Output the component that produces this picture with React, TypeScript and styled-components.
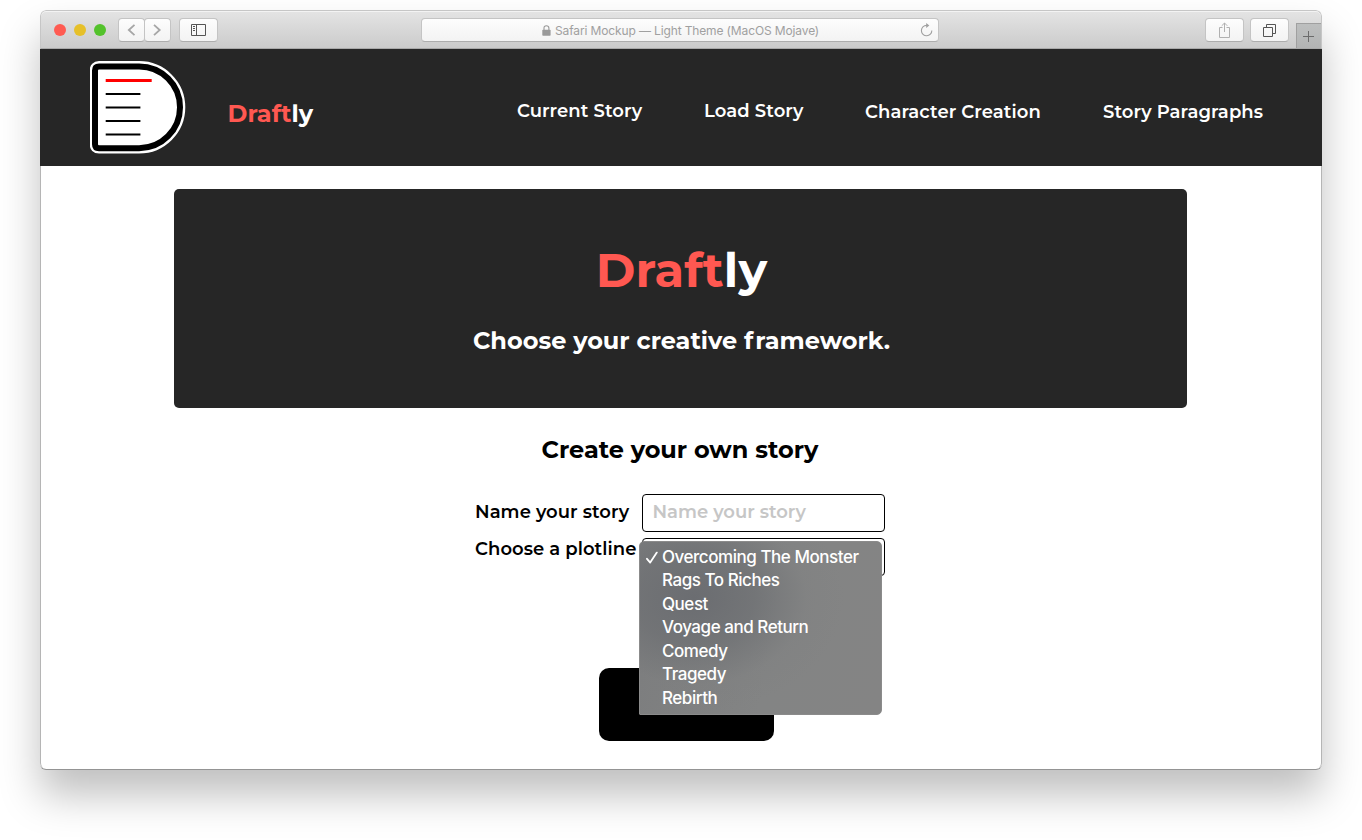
import React from "react";
import styled, { createGlobalStyle } from "styled-components";

const GlobalStyle = createGlobalStyle`
  * { box-sizing: border-box; }
  body { margin: 0; background: #fff; overflow: hidden; }
  h1, h2, p { margin: 0; }
`;

const display = `Montserrat, Inter, "Open Sans", sans-serif`;

const Desktop = styled.div`
  width: 1362px;
  height: 840px;
  padding: 10px 40px 0;
  overflow: hidden;
  background: #fff;
`;

const Window = styled.div`
  width: 1282px;
  height: 760px;
  border-radius: 6px;
  overflow: hidden;
  background: #fff;
  display: flex;
  flex-direction: column;
  border-bottom: 1px solid #949494;
  box-shadow: 0 25px 40px rgba(0, 0, 0, 0.25);
`;

const TitleBar = styled.div`
  height: 39px;
  flex: none;
  display: flex;
  align-items: flex-start;
  padding: 7px 0 0 13px;
  border: 1px solid #c6c6c6;
  border-bottom-color: #a9a9a9;
  border-radius: 6px 6px 0 0;
  background: linear-gradient(#e4e4e4, #cbcbcb);
  box-shadow: inset 0 1px 0 #f3f3f3;
`;

const Lights = styled.div`
  display: flex;
  gap: 8px;
  margin: 6px 12px 0 0;
`;

const Light = styled.span<{ $color: string }>`
  width: 12px;
  height: 12px;
  border-radius: 50%;
  background: ${(p) => p.$color};
`;

const ChromeButton = styled.button<{ $width: number; $gap?: number }>`
  width: ${(p) => p.$width}px;
  height: 24px;
  margin: 0 ${(p) => p.$gap ?? 0}px 0 0;
  padding: 0;
  flex: none;
  display: flex;
  align-items: center;
  justify-content: center;
  border: 1px solid #c4c4c4;
  border-bottom-color: #adadad;
  border-radius: 4px;
  background: linear-gradient(#fdfdfd, #f3f3f3);
`;

const Address = styled.div`
  width: 518px;
  height: 24px;
  flex: none;
  margin: 0 266px 0 203px;
  padding: 0 5px 0 120px;
  display: flex;
  align-items: center;
  border: 1px solid #c4c4c4;
  border-bottom-color: #adadad;
  border-radius: 4px;
  background: linear-gradient(#fdfdfd, #f3f3f3);
  color: #a0a0a0;
  font: 400 12px/22px Inter, sans-serif;
`;

const AddressText = styled.span`
  margin-left: 4px;
  padding-top: 1px;
  flex: 1;
  letter-spacing: -0.13px;
  white-space: nowrap;
`;

const NewTab = styled.div`
  width: 25px;
  height: 25px;
  margin-top: 5px;
  padding-right: 1px;
  display: flex;
  align-items: center;
  justify-content: center;
  border-left: 1px solid #a0a0a0;
  border-top: 1px solid #a0a0a0;
  background: linear-gradient(#bdbfbf, #b3b4b4);
`;

const Header = styled.header`
  height: 117px;
  flex: none;
  display: flex;
  align-items: flex-start;
  padding: 12px 58px 0 50px;
  background: #262626;
`;

const Brand = styled.div`
  width: 120px;
  margin: 38px auto 0 41.5px;
  color: #fff;
  font: 700 24px/30px ${display};
  letter-spacing: 0.06px;
`;

const Accent = styled.span`
  color: #ff5851;
`;

const Nav = styled.nav`
  display: flex;
  gap: 62px;
`;

const NavLink = styled.a<{ $width: number; $top: number }>`
  width: ${(p) => p.$width}px;
  margin-top: ${(p) => p.$top}px;
  color: #fff;
  font: 600 18px/24px ${display};
  letter-spacing: 0.08px;
  white-space: nowrap;
`;

const Page = styled.main`
  flex: 1;
  padding: 23px 134px 0 133px;
  border: solid #b5b5b5;
  border-width: 0 1px;
  border-radius: 0 0 6px 6px;
`;

const Hero = styled.section`
  height: 219px;
  padding: 52px 0 0 3px;
  border-radius: 5px;
  background: #262626;
  color: #fff;
  text-align: center;
`;

const HeroTitle = styled.h1`
  padding-right: 1px;
  font: 700 48px/58px ${display};
  letter-spacing: 0.1px;
`;

const HeroText = styled.p`
  margin-top: 27px;
  padding-right: 1px;
  font: 700 24px/30px ${display};
`;

const LooseLetter = styled.span`
  letter-spacing: 2px;
`;

const SectionTitle = styled.h2`
  margin-top: 27px;
  padding-right: 1px;
  text-align: center;
  color: #000;
  font: 700 24px/30px ${display};
`;

const Form = styled.form`
  width: 410px;
  margin: 29px 0 0 301px;
  display: flex;
  flex-direction: column;
  gap: 6px;
`;

const Field = styled.div`
  display: flex;
  position: relative;
`;

const Label = styled.label<{ $line: number }>`
  width: 167px;
  flex: none;
  color: #000;
  font: 600 18px/${(p) => p.$line}px ${display};
  letter-spacing: 0.05px;
  white-space: nowrap;
`;

const Control = styled.div`
  width: 243px;
  height: 38px;
  padding-left: 9.5px;
  border: 1px solid #000;
  border-radius: 4px;
  background: #fff;
  color: #c6c6c6;
  font: 600 18px/35px ${display};
`;

const Menu = styled.ul`
  position: absolute;
  top: 3px;
  left: 164px;
  width: 243px;
  height: 174px;
  margin: 0;
  padding: 3.5px 0 0 7px;
  list-style: none;
  border: 1px solid #8b8b8b;
  border-radius: 5px 5px 5px 1px;
  background: radial-gradient(ellipse 150px 115px at 54px 56px, #6b6d71, rgba(110, 112, 115, 0.75) 40%, rgba(125, 126, 127, 0.25) 75%, rgba(132, 132, 132, 0)),
    linear-gradient(100deg, #7c7d7e, #838484 55%, #848484);
`;

const MenuItem = styled.li`
  height: 23.5px;
  display: flex;
  align-items: center;
  color: #fff;
  font: 500 17px/23px Inter, sans-serif;
  letter-spacing: -0.46px;
  white-space: nowrap;
`;

const CheckSlot = styled.span`
  width: 15px;
  margin-left: -1px;
  margin-right: 1px;
  display: flex;
`;

const Submit = styled.button`
  display: block;
  width: 175px;
  height: 73px;
  margin: 92px 0 0 425px;
  border: 0;
  border-radius: 10px;
  background: #000;
`;

const Logo = () => (
  <svg width="96" height="93" viewBox="0 0 96 93" fill="none">
    <path d="M9 5.4H49.1A40.9 40.9 0 0 1 49.1 87.2H9Q5 87.2 5 83.2V9.4Q5 5.4 9 5.4Z" fill="#fff" stroke="#fff" strokeWidth="10.6" />
    <path d="M9 5.4H49.1A40.9 40.9 0 0 1 49.1 87.2H9Q5 87.2 5 83.2V9.4Q5 5.4 9 5.4Z" stroke="#000" strokeWidth="6" />
    <path d="M15.7 19.4H61.7" stroke="#f00" strokeWidth="3" />
    <path d="M15.7 32.9H50.4M15.7 46.4H50.4M15.7 60H50.4M15.7 73.4H50.4" stroke="#000" strokeWidth="2" />
  </svg>
);

const links = [
  { label: "Current Story", width: 125, top: 38 },
  { label: "Load Story", width: 99, top: 38 },
  { label: "Character Creation", width: 176, top: 39 },
  { label: "Story Paragraphs", width: 161, top: 39 },
];

const plots = ["Overcoming The Monster", "Rags To Riches", "Quest", "Voyage and Return", "Comedy", "Tragedy", "Rebirth"];

export default function App() {
  return (
    <>
      <GlobalStyle />
      <Desktop>
        <Window>
          <TitleBar>
            <Lights>
              <Light $color="#ff5b52" />
              <Light $color="#e6c029" />
              <Light $color="#53c22b" />
            </Lights>
            <ChromeButton $width={27} $gap={-1}>
              <svg width="9" height="12" viewBox="0 0 9 12" fill="none" stroke="#a6a6a6" strokeWidth="1.8"><path d="M7.5 .8L1.8 6L7.5 11.2" /></svg>
            </ChromeButton>
            <ChromeButton $width={27} $gap={8}>
              <svg width="9" height="12" viewBox="0 0 9 12" fill="none" stroke="#a6a6a6" strokeWidth="1.8"><path d="M1 .8L6.7 6L1 11.2" /></svg>
            </ChromeButton>
            <ChromeButton $width={39}>
              <svg width="15" height="12" viewBox="0 0 15 12" fill="none" stroke="#555">
                <path d="M.5 .5H14.5V11.5H.5ZM5.5 .5V11.5M2 2.5H4M2 4.5H4M2 6.5H4" />
              </svg>
            </ChromeButton>
            <Address>
              <svg width="9" height="11" viewBox="0 0 9 11" fill="none">
                <rect x="0.3" y="4.7" width="8.3" height="6" rx="0.7" fill="#999" />
                <path d="M2 5V3Q2 .8 4.4 .8T6.9 3V5" stroke="#999" strokeWidth="1.1" />
              </svg>
              <AddressText>Safari Mockup — Light Theme (MacOS Mojave)</AddressText>
              <svg width="13" height="14" viewBox="0 0 13 14" fill="none">
                <path d="M11.8 7.4A5.2 5.2 0 1 1 6.6 2.4H7.8" stroke="#a0a0a0" strokeWidth="1.1" />
                <path d="M6.2 0L9.3 2.5L6.2 4.9Z" fill="#a0a0a0" />
              </svg>
            </Address>
            <ChromeButton $width={39} $gap={6}>
              <svg width="11" height="16" viewBox="0 0 11 16" fill="none" stroke="#b0b0b0">
                <path d="M3.5 5.5H.5V15.5H10.5V5.5H7.5M5.5 10V1M2.7 3.8L5.5 1L8.3 3.8" />
              </svg>
            </ChromeButton>
            <ChromeButton $width={39} $gap={7}>
              <svg width="13" height="13" viewBox="0 0 13 13" fill="none" stroke="#555">
                <path d="M.5 3.5H9.5V12.5H.5ZM3.5 3.5V.5H12.5V9.5H9.5" />
              </svg>
            </ChromeButton>
            <NewTab>
              <svg width="11" height="11" viewBox="0 0 11 11" stroke="#6b6b6b"><path d="M5.5 0V11M0 5.5H11" /></svg>
            </NewTab>
          </TitleBar>
          <Header>
            <Logo />
            <Brand><Accent>Draft</Accent>ly</Brand>
            <Nav>
              {links.map((l) => (
                <NavLink key={l.label} $width={l.width} $top={l.top}>{l.label}</NavLink>
              ))}
            </Nav>
          </Header>
          <Page>
            <Hero>
              <HeroTitle><Accent>Draft</Accent>ly</HeroTitle>
              <HeroText>Choose your creative <LooseLetter>f</LooseLetter>ramework.</HeroText>
            </Hero>
            <SectionTitle>Create your own story</SectionTitle>
            <Form>
              <Field>
                <Label $line={37}>Name your story</Label>
                <Control>Name your story</Control>
              </Field>
              <Field>
                <Label $line={23}>Choose a plotline</Label>
                <Control />
                <Menu>
                  {plots.map((plot, i) => (
                    <MenuItem key={plot}>
                      <CheckSlot>
                        {i === 0 && (
                          <svg width="12" height="13" viewBox="0 0 12 13" fill="none" stroke="#fff" strokeWidth="1.8" strokeLinecap="round" strokeLinejoin="round"><path d="M1 7.8L4.2 11.6L10.8 1.6" /></svg>
                        )}
                      </CheckSlot>
                      {plot}
                    </MenuItem>
                  ))}
                </Menu>
              </Field>
            </Form>
            <Submit type="button" aria-label="Create story" />
          </Page>
        </Window>
      </Desktop>
    </>
  );
}
